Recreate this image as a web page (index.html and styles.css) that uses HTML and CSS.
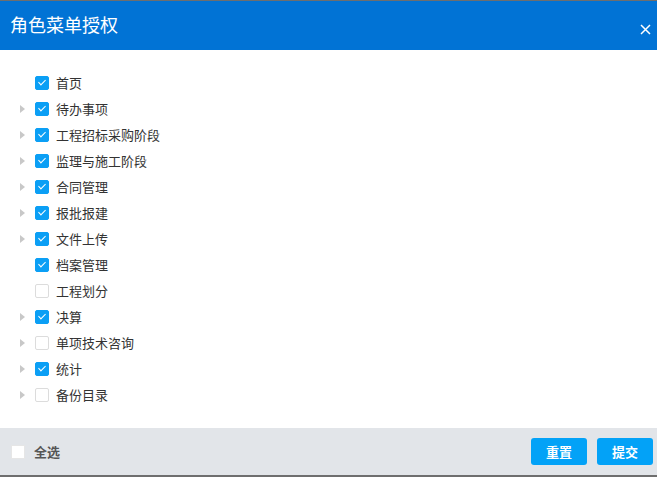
FILE: index.html
```html
<!DOCTYPE html>
<html lang="zh">
<head>
<meta charset="utf-8">
<title>角色菜单授权</title>
<link rel="stylesheet" href="styles.css">
</head>
<body>
<div class="dialog">
  <div class="header">
    <span class="title">角色菜单授权</span>
    <svg class="close" width="11" height="11" viewBox="0 0 11 11"><path d="M1 1L10 10M10 1L1 10" stroke="#fff" stroke-width="1.5" fill="none"/></svg>
  </div>
  <div class="content">
    <ul class="tree">
      <li class="row"><span class="arrow empty"></span><span class="cb on"></span><span class="label">首页</span></li>
      <li class="row"><span class="arrow"></span><span class="cb on"></span><span class="label">待办事项</span></li>
      <li class="row"><span class="arrow"></span><span class="cb on"></span><span class="label">工程招标采购阶段</span></li>
      <li class="row"><span class="arrow"></span><span class="cb on"></span><span class="label">监理与施工阶段</span></li>
      <li class="row"><span class="arrow"></span><span class="cb on"></span><span class="label">合同管理</span></li>
      <li class="row"><span class="arrow"></span><span class="cb on"></span><span class="label">报批报建</span></li>
      <li class="row"><span class="arrow"></span><span class="cb on"></span><span class="label">文件上传</span></li>
      <li class="row"><span class="arrow empty"></span><span class="cb on"></span><span class="label">档案管理</span></li>
      <li class="row"><span class="arrow empty"></span><span class="cb"></span><span class="label">工程划分</span></li>
      <li class="row"><span class="arrow"></span><span class="cb on"></span><span class="label">决算</span></li>
      <li class="row"><span class="arrow"></span><span class="cb"></span><span class="label">单项技术咨询</span></li>
      <li class="row"><span class="arrow"></span><span class="cb on"></span><span class="label">统计</span></li>
      <li class="row"><span class="arrow"></span><span class="cb"></span><span class="label">备份目录</span></li>
    </ul>
  </div>
  <div class="footer">
    <label class="all"><span class="cb-all"></span><span class="all-text">全选</span></label>
    <div class="actions">
      <button class="btn">重置</button>
      <button class="btn">提交</button>
    </div>
  </div>
</div>
</body>
</html>
```
FILE: styles.css
```css
html, body {
  margin: 0;
  padding: 0;
  height: 100%;
}
body {
  background: #6e6e6e;
  font-family: "Microsoft YaHei", "Noto Sans CJK SC", "Noto Sans", sans-serif;
  overflow: hidden;
}
.dialog {
  margin-top: 1px;
  height: 474px;
  background: #fff;
  display: flex;
  flex-direction: column;
}
.header {
  height: 49px;
  background: #0173d5;
  color: #fff;
  display: flex;
  align-items: center;
  justify-content: space-between;
  padding: 0 6px 0 10px;
}
.title {
  font-size: 18px;
  line-height: 1;
  margin-top: -3px;
}
.close {
  display: block;
  margin-top: 7px;
}
.content {
  flex: 1;
  padding-top: 20px;
}
.tree {
  list-style: none;
  margin: 0;
  padding: 0;
}
.row {
  height: 26px;
  display: flex;
  align-items: center;
}
.arrow {
  width: 0;
  height: 0;
  margin-left: 20px;
  border-top: 4px solid transparent;
  border-bottom: 4px solid transparent;
  border-left: 5px solid #c8c8c8;
  margin-right: 10px;
}
.arrow.empty {
  border-left-color: transparent;
}
.cb {
  width: 12px;
  height: 12px;
  border: 1px solid #dcdcdc;
  border-radius: 2px;
  background: #fff;
  position: relative;
  box-sizing: content-box;
}
.cb.on {
  background: #0b9ff5;
  border-color: #0b9ff5;
}
.cb.on::after {
  content: "";
  position: absolute;
  left: 4px;
  top: 1px;
  width: 3px;
  height: 6px;
  border-right: 1.6px solid #fff;
  border-bottom: 1.6px solid #fff;
  transform: rotate(45deg);
}
.label {
  margin-left: 7px;
  font-size: 13px;
  color: #333;
  line-height: 1;
  margin-top: -1px;
}
.footer {
  height: 47px;
  background: #e2e5e9;
  display: flex;
  align-items: center;
  justify-content: space-between;
  padding: 0 4px 0 11px;
}
.all {
  display: flex;
  align-items: center;
}
.cb-all {
  width: 12px;
  height: 12px;
  background: #fff;
  border: 1px solid #e6e6e6;
}
.all-text {
  margin-left: 9px;
  font-size: 13px;
  font-weight: bold;
  color: #555;
}
.actions {
  display: flex;
  gap: 10px;
}
.btn {
  width: 56px;
  height: 27px;
  border: none;
  border-radius: 3px;
  background: #03a2f7;
  color: #fff;
  font-family: inherit;
  font-size: 13px;
  font-weight: bold;
  padding: 0;
}
```
